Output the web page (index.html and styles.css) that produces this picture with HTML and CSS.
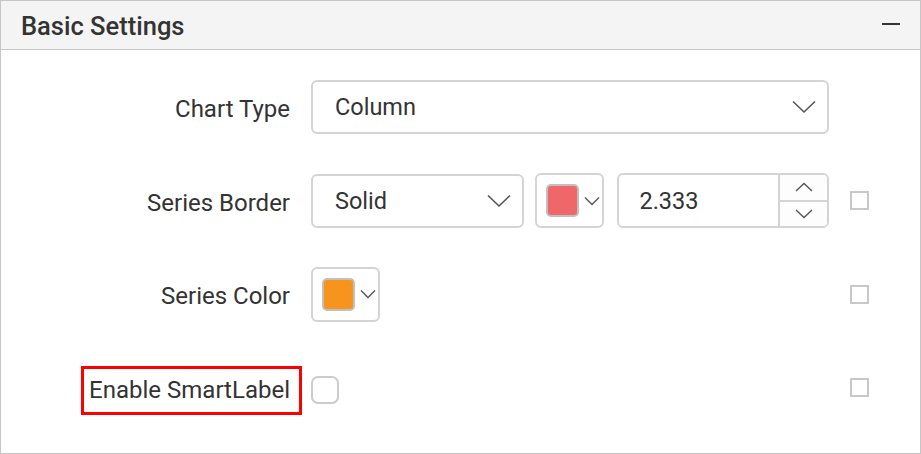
FILE: index.html
```html
<!DOCTYPE html>
<html>
<head>
<meta charset="utf-8">
<link rel="stylesheet" href="styles.css">
</head>
<body>
<div class="panel">
  <div class="panel-header">
    <span class="title">Basic Settings</span>
    <span class="collapse" aria-label="collapse"></span>
  </div>
  <div class="panel-body">
    <div class="label">Chart Type</div>
    <div class="controls">
      <div class="dropdown wide">
        <span class="value">Column</span>
        <svg class="chev" width="24" height="14" viewBox="0 0 24 14"><path d="M1 1.5 L12 12 L23 1.5" fill="none" stroke="#555" stroke-width="1.6"/></svg>
      </div>
    </div>
    <div class="check-cell"></div>

    <div class="label">Series Border</div>
    <div class="controls">
      <div class="dropdown style">
        <span class="value">Solid</span>
        <svg class="chev" width="24" height="14" viewBox="0 0 24 14"><path d="M1 1.5 L12 12 L23 1.5" fill="none" stroke="#555" stroke-width="1.6"/></svg>
      </div>
      <div class="colorpick">
        <span class="swatch red"></span>
        <svg class="chev-sm" width="16" height="10" viewBox="0 0 16 10"><path d="M1 1.5 L8 8.5 L15 1.5" fill="none" stroke="#555" stroke-width="1.4"/></svg>
      </div>
      <div class="numeric">
        <span class="value">2.333</span>
        <div class="spin">
          <div class="spin-btn"><svg width="18" height="10" viewBox="0 0 18 10"><path d="M1 9 L9 1.5 L17 9" fill="none" stroke="#555" stroke-width="1.4"/></svg></div>
          <div class="spin-btn down"><svg width="18" height="10" viewBox="0 0 18 10"><path d="M1 1 L9 8.5 L17 1" fill="none" stroke="#555" stroke-width="1.4"/></svg></div>
        </div>
      </div>
    </div>
    <div class="check-cell"><span class="checkbox"></span></div>

    <div class="label">Series Color</div>
    <div class="controls">
      <div class="colorpick">
        <span class="swatch orange"></span>
        <svg class="chev-sm" width="16" height="10" viewBox="0 0 16 10"><path d="M1 1.5 L8 8.5 L15 1.5" fill="none" stroke="#555" stroke-width="1.4"/></svg>
      </div>
    </div>
    <div class="check-cell"><span class="checkbox"></span></div>

    <div class="label"><span class="highlight">Enable SmartLabel</span></div>
    <div class="controls">
      <span class="round-check"></span>
    </div>
    <div class="check-cell"><span class="checkbox"></span></div>
  </div>
</div>
</body>
</html>
```

FILE: styles.css
```css
html, body {
  margin: 0;
  padding: 0;
  background: #ffffff;
}
body {
  font-family: Roboto, "Liberation Sans", sans-serif;
  color: #333333;
}
.panel {
  width: 921px;
  height: 454px;
  box-sizing: border-box;
  border: 1px solid #c6c6c6;
  background: #ffffff;
}
.panel-header {
  height: 48px;
  background: #f4f4f4;
  border-bottom: 1px solid #c6c6c6;
  display: flex;
  align-items: center;
  justify-content: space-between;
  padding: 0 20px 0 20px;
}
.title {
  font-size: 25.5px;
  font-weight: 500;
  color: #333333;
  margin-top: 1px;
}
.collapse {
  width: 18px;
  height: 2.5px;
  background: #333;
  margin-top: -2px;
}
.panel-body {
  display: grid;
  grid-template-columns: 289px 518px 19px;
  grid-auto-rows: 54px;
  column-gap: 21px;
  row-gap: 39.5px;
  padding-top: 30px;
  align-items: center;
}
.label {
  font-size: 24px;
  text-align: right;
  color: #333;
  white-space: nowrap;
  padding-top: 4px;
}
.highlight {
  position: relative;
}
.highlight::after {
  content: "";
  position: absolute;
  left: -8px;
  right: -12px;
  top: -10px;
  bottom: -11px;
  border: 3px solid #ff0000;
}
.controls {
  display: flex;
  align-items: center;
  height: 54px;
}
.dropdown {
  box-sizing: border-box;
  height: 54px;
  border: 2px solid #d4d4d4;
  border-radius: 6px;
  display: flex;
  align-items: center;
  justify-content: space-between;
  padding: 0 11px 0 22px;
  font-size: 23.5px;
  color: #333;
}
.dropdown.wide {
  width: 518px;
}
.dropdown.style {
  width: 213px;
}
.colorpick {
  box-sizing: border-box;
  width: 70px;
  height: 55px;
  border: 2px solid #d4d4d4;
  border-radius: 6px;
  margin-left: 11px;
  display: flex;
  align-items: center;
  padding-left: 9px;
  gap: 5px;
}
.controls > .colorpick:first-child {
  margin-left: 0;
  width: 69px;
}
.swatch {
  box-sizing: border-box;
  width: 33px;
  height: 33px;
  border: 2px solid #c0c0c0;
  border-radius: 5px;
}
.swatch.red {
  background: #f0676a;
}
.swatch.orange {
  background: #f7941e;
}
.numeric {
  box-sizing: border-box;
  width: 212px;
  height: 55px;
  margin-left: 13px;
  border: 2px solid #d4d4d4;
  border-radius: 6px;
  display: flex;
  align-items: stretch;
  overflow: hidden;
}
.numeric .value {
  flex: 1;
  display: flex;
  align-items: center;
  padding-left: 20px;
  font-size: 23.5px;
}
.spin {
  width: 47px;
  border-left: 2px solid #d4d4d4;
  display: flex;
  flex-direction: column;
}
.spin-btn {
  flex: 1;
  display: flex;
  align-items: center;
  justify-content: center;
  background: #fdfdfd;
}
.spin-btn.down {
  border-top: 2px solid #d4d4d4;
}
.check-cell {
  display: flex;
  align-items: center;
}
.checkbox {
  box-sizing: border-box;
  width: 19px;
  height: 19px;
  border: 2px solid #c8c8c8;
  background: #fff;
}
.round-check {
  box-sizing: border-box;
  width: 28px;
  height: 28px;
  border: 2px solid #cccccc;
  border-radius: 7px;
  margin-top: 5px;
}
```
